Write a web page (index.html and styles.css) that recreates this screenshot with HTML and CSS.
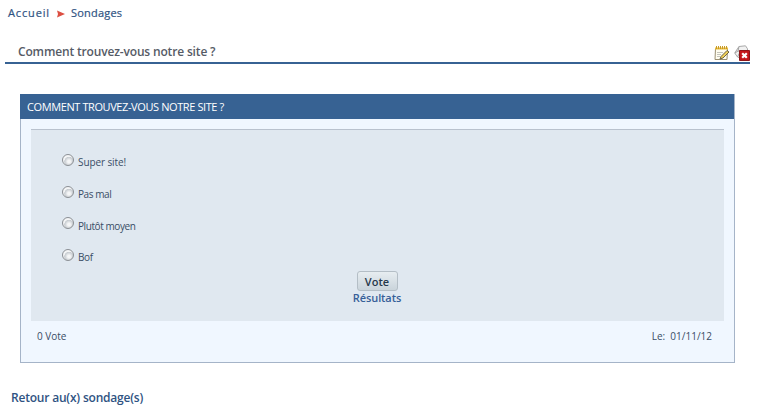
FILE: index.html
```html
<!DOCTYPE html>
<html lang="fr">
<head>
<meta charset="utf-8">
<title>Sondages</title>
<link rel="stylesheet" href="styles.css">
</head>
<body>
<nav class="breadcrumb">
  <a class="crumb-home" href="#">Accueil</a>
  <svg class="arrow" width="8" height="8" viewBox="0 0 8 8"><path d="M0 .5 8 4 0 7.500 1 4z" fill="#dc4f42"/></svg>
  <a class="crumb-polls" href="#">Sondages</a>
</nav>
<header class="heading">
  <h1><span>Comment trouvez-vous notre site ?</span></h1>
  <div class="actions">
    <svg width="16" height="16" viewBox="0 0 16 16">
      <path d="M1.500 3.500h12l-.5 11H1z" fill="#fffdf0" stroke="#9a8f72"/>
      <path d="M1 2.500h13v2H1z" fill="#e9bd3c"/>
      <path d="M2.500 1v3M4.500 1v3M6.500 1v3M8.500 1v3M10.500 1v3M12.500 1v3" stroke="#c99a25"/>
      <path d="M3 7.500h6M3 9.500h4M3 11.500h3" stroke="#c4c4bc"/>
      <path d="M7 11.500 13 5.500l2 1.500-6 6-3 1z" fill="#f0cf55" stroke="#5f563d" stroke-width=".9"/>
    </svg>
    <svg width="16" height="16" viewBox="0 0 16 16">
      <path d="M5 1.500 11.500.8l2 3V9L8.500 14l-5-2L.7 8z" fill="#f1f1f1" stroke="#a8a8a8"/>
      <path d="M5 1.500 4 6 1 8M4 6l5 1M3.500 12l2-4" fill="none" stroke="#a2a2a2"/>
      <path d="M5.500 5.500h10v10h-10z" fill="#c4161a" stroke="#8f1518"/>
      <path d="m8.200 8.200 4.600 4.600m0-4.600-4.600 4.600" stroke="#fff" stroke-width="2.200"/>
    </svg>
  </div>
</header>
<main class="poll">
  <h2><span>COMMENT TROUVEZ-VOUS NOTRE SITE ?</span></h2>
  <form class="choices">
    <label><input type="radio" name="avis"><span class="c1">Super site!</span></label>
    <label><input type="radio" name="avis"><span class="c2">Pas mal</span></label>
    <label><input type="radio" name="avis"><span class="c3">Plutôt moyen</span></label>
    <label><input type="radio" name="avis"><span class="c4">Bof</span></label>
    <div class="submit">
      <button type="button">Vote</button>
      <a href="#">Résultats</a>
    </div>
  </form>
  <footer class="meta"><span>0 Vote</span><span class="date">Le:&nbsp; 01/11/12</span></footer>
</main>
<a class="back" href="#">Retour au(x) sondage(s)</a>
</body>
</html>
```
FILE: styles.css
```css
* { box-sizing: border-box; }
body {
  margin: 0;
  height: 407px;
  overflow: hidden;
  background: #fff;
  font-family: "Trebuchet MS", "Open Sans", sans-serif;
  font-size: 11px;
  color: #3a4d66;
}
a { color: #2f5382; text-decoration: none; }
h1, h2 { margin: 0; }
.breadcrumb {
  display: flex;
  align-items: center;
  height: 26px;
  padding-left: 8px;
  font-weight: 500;
}
.breadcrumb a { margin-top: -1px; -webkit-text-stroke: .2px currentColor; }
.crumb-home { width: 49px; letter-spacing: .85px; }
.arrow { margin: 1px 6px 0 0; }
.crumb-polls { letter-spacing: .2px; }
.heading {
  display: flex;
  justify-content: space-between;
  height: 38px;
  margin: 0 9px 0 5px;
  padding: 17px 0 0 13px;
  border-bottom: 2px solid #376293;
}
h1 {
  font-size: 12px;
  line-height: 18px;
  font-weight: 600;
  letter-spacing: -.16px;
  color: #565b66;
}
.actions { display: flex; gap: 4px; padding-top: 2px; }
.poll {
  width: 715px;
  height: 269px;
  margin: 30px 0 0 20px;
  border: 1px solid #a5b4c8;
  border-top: 0;
  background: #f0f7ff;
}
h2 {
  height: 25px;
  margin: 0 0 0 -1px;
  padding-left: 7px;
  background: #376293;
  color: #fff;
  font-size: 11px;
  line-height: 26px;
  font-weight: 400;
  letter-spacing: -.4px;
}
.choices {
  width: 693px;
  height: 192px;
  margin: 10px 0 0 10px;
  padding: 15px 0 0 31px;
  border-top: 1px solid #b9c2ce;
  background: #e0e8f0;
}
.choices label {
  display: flex;
  align-items: center;
  height: 31.700px;
  font-size: 10px;
}
.choices input {
  appearance: none;
  width: 12px;
  height: 12px;
  margin: 0 4px 2px 0;
  border: 1px solid #8b8f94;
  border-radius: 50%;
  background: radial-gradient(circle at 60% 65%, #f5f6f7 15%, #c5cacf 50%, #f4f5f6 56%);
}
.choices label span { padding-top: 3px; }
.c1 { letter-spacing: -.1px; }
.c2, .c3, .c4 { letter-spacing: -.42px; }
.submit {
  display: flex;
  flex-direction: column;
  align-items: center;
  width: 630px;
  margin: -1px 0 0;
}
.submit button {
  width: 41px;
  height: 20px;
  padding: 2px 0 0;
  border: 1px solid #b4bec6;
  border-radius: 3px;
  background: linear-gradient(#e7edf1, #cad4db);
  color: #26384b;
  font: 600 11px/15px "Trebuchet MS", "Open Sans", sans-serif;
}
.submit a { font-weight: 600; line-height: 14px; letter-spacing: -.1px; color: #375f98; }
.meta {
  display: flex;
  justify-content: space-between;
  padding: 7px 22px 0 16px;
  font-size: 10px;
  line-height: 16px;
}
.back {
  display: block;
  width: max-content;
  margin: 26px 0 0 11px;
  font-size: 12px;
  font-weight: 600;
  line-height: 18px;
  letter-spacing: -.2px;
}
```
